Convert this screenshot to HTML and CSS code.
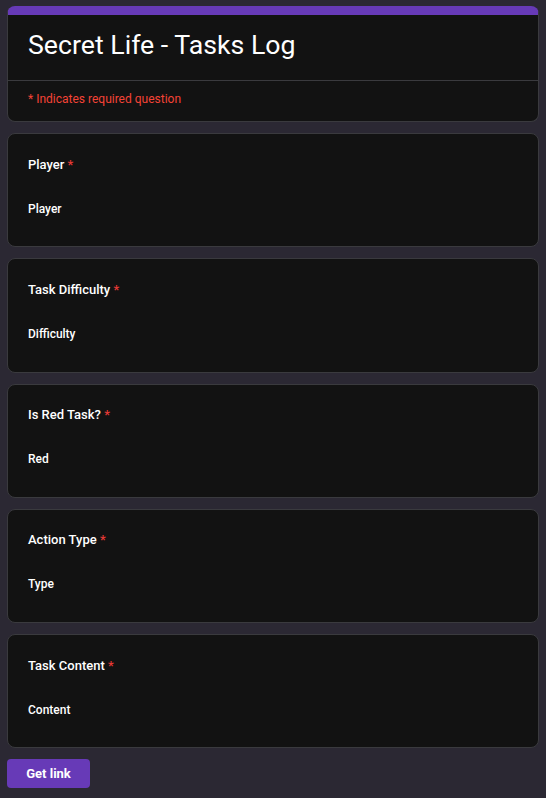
FILE: index.html
```html
<!DOCTYPE html>
<html>
<head>
<meta charset="utf-8">
<link rel="stylesheet" href="styles.css">
</head>
<body>
<main class="page">
  <section class="card header-card">
    <div class="header-main">
      <h1 class="title">Secret Life - Tasks Log</h1>
    </div>
    <div class="header-note">* Indicates required question</div>
  </section>
  <section class="card question">
    <div class="q-label">Player <span class="req">*</span></div>
    <div class="q-answer">Player</div>
  </section>
  <section class="card question">
    <div class="q-label">Task Difficulty <span class="req">*</span></div>
    <div class="q-answer">Difficulty</div>
  </section>
  <section class="card question">
    <div class="q-label">Is Red Task? <span class="req">*</span></div>
    <div class="q-answer">Red</div>
  </section>
  <section class="card question">
    <div class="q-label">Action Type <span class="req">*</span></div>
    <div class="q-answer">Type</div>
  </section>
  <section class="card question">
    <div class="q-label">Task Content <span class="req">*</span></div>
    <div class="q-answer">Content</div>
  </section>
  <div class="actions">
    <button class="btn">Get link</button>
  </div>
</main>
</body>
</html>
```
FILE: styles.css
```css
html, body {
  margin: 0;
  padding: 0;
  background: #2b2833;
}
body {
  font-family: Roboto, "Liberation Sans", sans-serif;
  color: #f1f1f1;
}
.page {
  padding: 6px 7px 0 7px;
  display: flex;
  flex-direction: column;
  gap: 11px;
}
.card {
  background: #121212;
  border: 1px solid #3a3a3e;
  border-radius: 8px;
  box-sizing: border-box;
  flex-shrink: 0;
}
.header-card {
  border-top: 9px solid #673ab7;
  height: 116px;
  display: flex;
  flex-direction: column;
}
.header-main {
  height: 66px;
  box-sizing: border-box;
  padding: 12px 20px 0 20px;
  border-bottom: 1px solid #3a3a3e;
}
.title {
  margin: 0;
  font-size: 26.7px;
  font-weight: 400;
  line-height: 36px;
  color: #ffffff;
}
.header-note {
  padding: 10px 20px 0 20px;
  font-size: 12px;
  line-height: 16px;
  color: #f44336;
}
.question {
  height: 114.25px;
  padding: 22.6px 20px 0 20px;
}
.q-label {
  font-size: 13px;
  font-weight: 500;
  line-height: 16px;
  color: #ffffff;
}
.req {
  color: #e53935;
}
.q-answer {
  margin-top: 28px;
  font-size: 12px;
  font-weight: 500;
  line-height: 16px;
  color: #ffffff;
}
.actions {
  display: flex;
  flex-shrink: 0;
}
.btn {
  background: #673ab7;
  color: #ffffff;
  border: none;
  border-radius: 4px;
  width: 83px;
  height: 29px;
  font-family: Roboto, "Liberation Sans", sans-serif;
  font-size: 13px;
  font-weight: 700;
  padding: 0;
}
```
